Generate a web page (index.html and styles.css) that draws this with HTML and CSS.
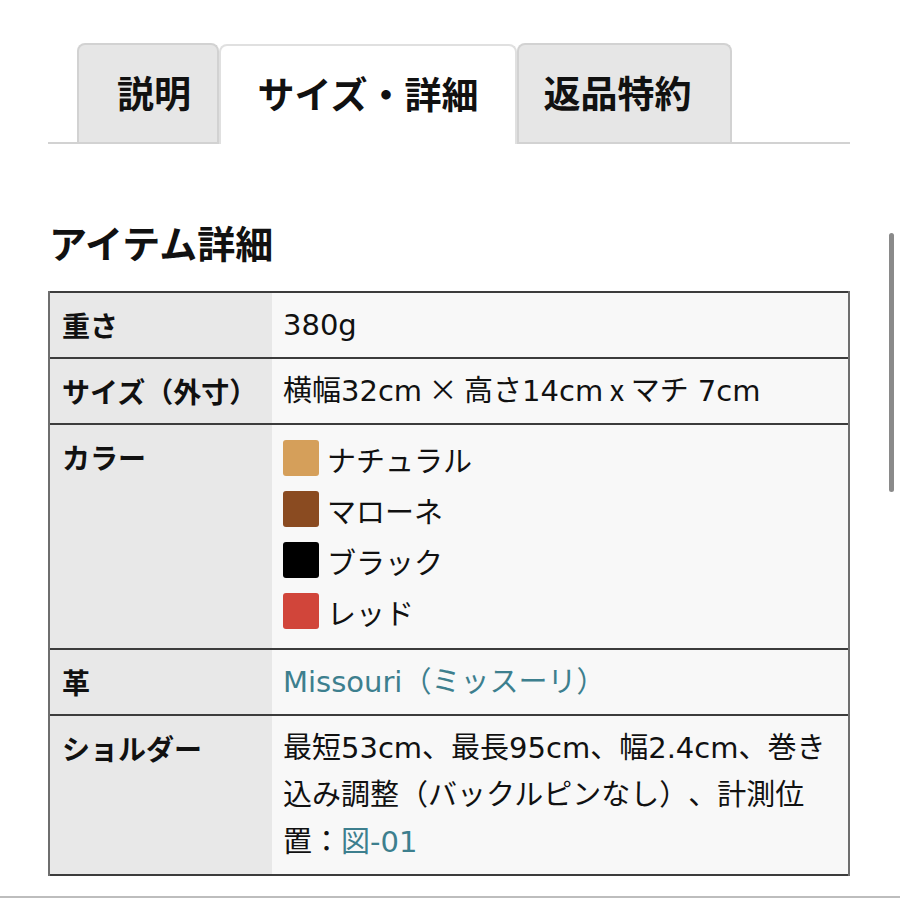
FILE: index.html
```html
<!DOCTYPE html>
<html lang="ja">
<head>
<meta charset="utf-8">
<link rel="stylesheet" href="styles.css">
</head>
<body>
<div class="page">
  <div class="tabs">
    <div class="tab tab-desc">説明</div>
    <div class="tab tab-size active">サイズ・詳細</div>
    <div class="tab tab-return">返品特約</div>
  </div>
  <h2 class="heading">アイテム詳細</h2>
  <table class="spec">
    <tr>
      <th>重さ</th>
      <td>380g</td>
    </tr>
    <tr>
      <th>サイズ（外寸）</th>
      <td>横幅32cm<span class="narrow"> × </span>高さ14cm<span class="narrow"> x </span>マチ 7cm</td>
    </tr>
    <tr>
      <th>カラー</th>
      <td class="colors">
        <div class="color"><span class="swatch natural"></span>ナチュラル</div>
        <div class="color"><span class="swatch marrone"></span>マローネ</div>
        <div class="color"><span class="swatch black"></span>ブラック</div>
        <div class="color"><span class="swatch red"></span>レッド</div>
      </td>
    </tr>
    <tr>
      <th>革</th>
      <td><a class="link" href="#">Missouri（ミッスーリ）</a></td>
    </tr>
    <tr>
      <th>ショルダー</th>
      <td>最短53cm、最長95cm、幅2.4cm、巻き込み調整（バックルピンなし）、計測位置：<a class="link" href="#">図-01</a></td>
    </tr>
  </table>
</div>
<div class="bottom-line"></div>
<div class="scrollbar"></div>
</body>
</html>
```

FILE: styles.css
```css
html, body {
  margin: 0;
  padding: 0;
  background: #ffffff;
}
body {
  font-family: "Noto Sans CJK JP", "Noto Sans", sans-serif;
  color: #111111;
  width: 900px;
  height: 900px;
  overflow: hidden;
  position: relative;
  text-spacing-trim: space-all;
}
.page {
  margin-left: 48px;
  width: 802px;
  padding-top: 43px;
}
.tabs {
  display: flex;
  align-items: flex-end;
  padding-left: 29px;
  border-bottom: 2px solid #d2d2d2;
}
.tab {
  box-sizing: border-box;
  height: 99px;
  border: 2px solid #d2d2d2;
  border-bottom: none;
  border-radius: 8px 8px 0 0;
  background: #e6e6e6;
  font-size: 37px;
  font-weight: 700;
  line-height: 95px;
  text-align: center;
  color: #111;
}
.tab-desc {
  width: 142px;
  padding-left: 12px;
}
.tab-size {
  width: 298px;
}
.tab-return {
  width: 215px;
  padding-right: 14px;
}
.tab.active {
  background: #ffffff;
  height: 100px;
  margin-bottom: -2px;
  line-height: 94px;
  border-color: #e0e0e0;
}
.heading {
  margin: 75px 0 0 1px;
  font-size: 38px;
  font-weight: 700;
  line-height: 46px;
  color: #111;
}
.spec {
  margin-top: 26px;
  width: 802px;
  border-collapse: collapse;
  line-height: 47px;
}
.spec tr {
  border-top: 2px solid #3c3c3c;
  border-bottom: 2px solid #3c3c3c;
}
.spec th, .spec td {
  vertical-align: top;
  padding: 9px 18px 8px 11px;
  text-align: left;
}
.spec th {
  width: 198px;
  padding-left: 12px;
  padding-right: 12px;
  background: #e8e8e8;
  font-size: 28px;
  font-weight: 700;
  border-left: 2px solid #6e6e6e;
}
.spec td {
  background: #f8f8f8;
  font-family: "DejaVu Sans", "Noto Sans CJK JP", sans-serif;
  font-size: 29px;
  font-weight: 400;
  border-right: 2px solid #6e6e6e;
}
.narrow {
  font-family: "Noto Sans CJK JP", sans-serif;
  line-height: 1;
}
.spec td.colors {
  padding-top: 12px;
  padding-bottom: 7px;
}
.color {
  display: flex;
  align-items: center;
  height: 51px;
  line-height: 51px;
}
.swatch {
  width: 36px;
  height: 36px;
  border-radius: 3px;
  margin-right: 8px;
  margin-bottom: 10px;
  flex: none;
}
.natural { background: #d59f5a; }
.marrone { background: #8a4b21; }
.black { background: #000000; }
.red { background: #d1453a; }
.link {
  color: #3d7f8e;
  text-decoration: none;
}
.bottom-line {
  position: absolute;
  left: 0;
  right: 0;
  top: 896px;
  height: 2px;
  background: #bdbdbd;
}
.scrollbar {
  position: absolute;
  left: 889px;
  top: 233px;
  width: 5px;
  height: 259px;
  border-radius: 3px;
  background: #8a8a8a;
}
```
